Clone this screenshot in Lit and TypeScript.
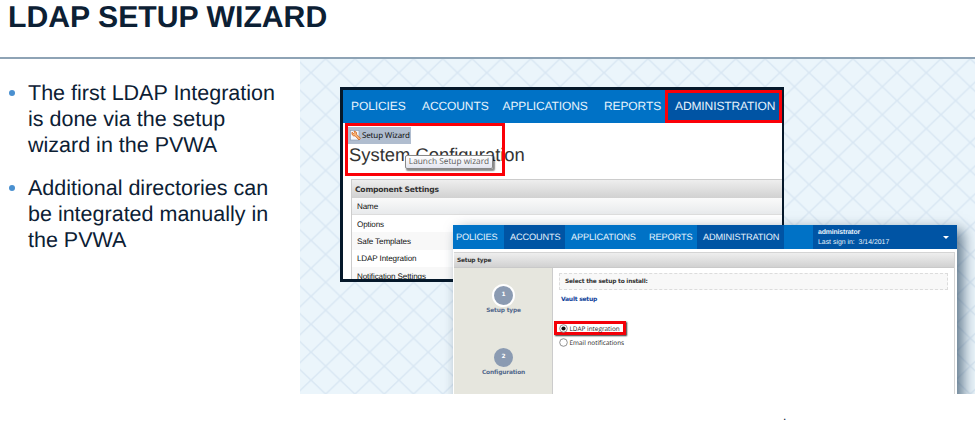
import { LitElement, html, css, svg } from "lit";
import { customElement } from "lit/decorators.js";
import { classMap } from "lit/directives/class-map.js";

@customElement("settings-window")
class SettingsWindow extends LitElement {
  static styles = css`
    :host { display: flex; flex-direction: column; box-sizing: border-box; width: 444px; height: 195px; border: solid #05182a; border-width: 3px 2px 3px 3px; background: #fff; overflow: hidden; font-family: "Liberation Sans", sans-serif; }
    * { box-sizing: border-box; }
    nav { display: flex; flex: none; height: 33px; background: #0072c6; align-items: stretch; color: #e6f2fc; font-size: 12px; letter-spacing: -.1px; }
    nav span { display: flex; align-items: center; padding: 0 0 1px 8px; white-space: nowrap; }
    .policies { width: 71px; } .accounts { width: 80.5px; } .applications { width: 101.5px; } .reports { width: 69px; }
    nav .admin { flex: 1; background: #0054a4; border: 3px solid #fb0007; padding-left: 7px; }
    .main { position: relative; display: flex; flex-direction: column; flex: 1; }
    .tool { display: flex; align-items: center; gap: 1px; width: 63px; height: 17px; margin: 4px 0 0 5px; padding-left: 2px; background: #b0bdcf; font: 8px "Noto Sans", sans-serif; color: #111; white-space: nowrap; letter-spacing: -.15px; }
    .tool svg { flex: none; width: 11px; height: 11px; }
    h2 { margin: 0 0 0 6px; font-size: 18.4px; line-height: 21px; height: 21px; font-weight: 400; color: #333; white-space: nowrap; }
    .mark { position: absolute; left: 2px; top: 0; width: 160px; height: 53px; border: 3px solid #fb0007; }
    .tip { position: absolute; left: 62px; top: 32px; width: 88px; height: 14px; border: 1px solid #888; border-radius: 2px; background: linear-gradient(#fff, #e3e5ef); box-shadow: 1.5px 1.5px 1.5px #0007; color: #5c5c5c; font: 8.3px/12px "Open Sans", sans-serif; text-align: center; white-space: nowrap; }
    .table { margin: 14px 0 0 8px; border-left: 1px solid #ccc; border-top: 1px solid #ccc; display: flex; flex-direction: column; }
    .table div { flex: none; height: 17.4px; display: flex; align-items: center; padding-left: 5px; font-size: 8.1px; color: #111; background: #fff; letter-spacing: -.13px; white-space: nowrap; }
    .table .caption { height: 18px; background: linear-gradient(#eee, #d1d1d1); font: bold 7.6px "DejaVu Sans", sans-serif; color: #333; padding-left: 3px; letter-spacing: -.2px; }
    .table .name { height: 17px; background: linear-gradient(#fafafa, #e8eaec); border-bottom: 1px solid #ddd; }
    .table .alt { background: #f8f8f8; }
    .table .name, .table .caption ~ div { padding-top: 1px; }
  `;
  render() {
    return html`
      <nav>
        <span class="policies">POLICIES</span><span class="accounts">ACCOUNTS</span><span class="applications">APPLICATIONS</span><span class="reports">REPORTS</span><span class="admin">ADMINISTRATION</span>
      </nav>
      <div class="main">
        <div class="tool">
          <svg viewBox="0 0 11 11"><rect x=".5" y=".5" width="8.5" height="9.5" fill="#f4f7fb" stroke="#8798ad" stroke-width=".6"/><path d="M2 2.2 3.6 3.6 4.7 2.4 4 1.2C6 1 7 2.6 6.4 4.2L10.5 8.4 9 10 5 5.8C3.1 6.5 1.4 4.6 2 2.2Z" fill="#f7b477" stroke="#d4641c" stroke-width=".8"/></svg>
          <span>Setup Wizard</span>
        </div>
        <h2>System Configuration</h2>
        <div class="table">
          <div class="caption">Component Settings</div>
          <div class="name">Name</div>
          <div>Options</div>
          <div class="alt">Safe Templates</div>
          <div>LDAP Integration</div>
          <div class="alt">Notification Settings</div>
        </div>
        <div class="mark"></div>
        <div class="tip">Launch Setup wizard</div>
      </div>`;
  }
}

@customElement("wizard-window")
class WizardWindow extends LitElement {
  static styles = css`
    :host { display: flex; flex-direction: column; width: 504px; height: 190px; background: #fff; box-shadow: 6px 5px 13px 0 #0d2c4aa0; font-family: "Liberation Sans", sans-serif; }
    * { box-sizing: border-box; }
    nav { display: flex; flex: none; height: 24px; background: #0072c6; color: #e6f2fc; font-size: 9.2px; letter-spacing: -.12px; }
    nav span { display: flex; align-items: center; padding: 0 0 1px 6px; white-space: nowrap; }
    nav .on { background: #0054a4; }
    .policies { width: 51px; } .accounts { width: 61px; } .applications { width: 78px; } .reports { width: 54px; } .admin { width: 87px; }
    nav .policies { padding-left: 3px; }
    .user { margin-left: 29px; flex: 1; background: #0054a4; display: flex; align-items: center; justify-content: space-between; padding: 1px 8px 0 5px; font-size: 6.9px; line-height: 10px; letter-spacing: 0; }
    .user b { display: block; font-size: 6.9px; letter-spacing: -.15px; }
    .arrow { border: solid transparent; border-width: 3px 3px 0; border-top-color: #fff; }
    .panel { display: flex; flex-direction: column; flex: 1; margin: 3px 2px 0 1px; border: solid #d4d4d4; border-width: 1px 1px 0 0; }
    .caption { height: 15px; flex: none; display: flex; align-items: center; background: linear-gradient(#eee, #d1d1d1); font: bold 5.9px "DejaVu Sans", sans-serif; color: #333; padding: 1px 0 0 3px; letter-spacing: -.22px; border-bottom: 1px solid #c9c9c9; }
    .body { flex: 1; display: flex; }
    .steps { width: 99px; background: #e6e6de; border-right: 1.5px solid #ccc; display: flex; flex-direction: column; align-items: center; padding: 15.5px 0 0 1px; font: bold 5.9px/8px "DejaVu Sans", sans-serif; letter-spacing: -.18px; color: #53698c; }
    .step { display: flex; flex-direction: column; align-items: center; height: 62px; }
    .disc { display: flex; align-items: center; justify-content: center; width: 23px; height: 23px; border: 2px solid #e6e6de; border-radius: 50%; background: #8b9bb2; color: #fff; }
    .step.current .disc { border-color: #fff; }
    .content { flex: 1; padding: 5px 6px 0 5.5px; font: 6.4px "Open Sans", sans-serif; color: #222; }
    .hint { height: 17px; border: 1px dashed #dcdcdc; background: #f8f8f8; display: flex; align-items: center; padding: 1px 0 0 5.5px; font: bold 5.9px "DejaVu Sans", sans-serif; letter-spacing: -.2px; color: #333; }
    .title { font: bold 6px/8px "DejaVu Sans", sans-serif; letter-spacing: -.25px; color: #0f429a; margin: 6px 0 17px 2.5px; }
    .option { display: flex; align-items: center; gap: 2px; height: 14px; padding-left: 5px; margin-left: -5px; width: 72px; white-space: nowrap; }
    .chosen { border: 3px solid #f40008; padding-left: 2px; box-shadow: 1px 1px 1.5px #333; }
    .option svg { width: 9px; height: 9px; flex: none; }
  `;
  radio(on: boolean) {
    return html`<svg viewBox="0 0 9 9"><circle cx="4.5" cy="4.5" r="3.8" fill="#fff" stroke="#777" stroke-width=".8"/>${on ? svg`<circle cx="4.5" cy="4.5" r="2.1" fill="#111"/>` : null}</svg>`;
  }
  step(n: number, label: string, current = false) {
    return html`<div class=${classMap({ step: true, current })}><span class="disc">${n}</span><span>${label}</span></div>`;
  }
  render() {
    return html`
      <nav>
        <span class="policies">POLICIES</span><span class="accounts on">ACCOUNTS</span><span class="applications">APPLICATIONS</span><span class="reports">REPORTS</span><span class="admin on">ADMINISTRATION</span>
        <div class="user"><div><b>administrator</b>Last sign in: &nbsp;3/14/2017</div><i class="arrow"></i></div>
      </nav>
      <div class="panel">
        <div class="caption">Setup type</div>
        <div class="body">
          <div class="steps">${this.step(1, "Setup type", true)}${this.step(2, "Configuration")}</div>
          <div class="content">
            <div class="hint">Select the setup to install:</div>
            <div class="title">Vault setup</div>
            <div class="option chosen">${this.radio(true)}<span>LDAP integration</span></div>
            <div class="option">${this.radio(false)}<span>Email notifications</span></div>
          </div>
        </div>
      </div>`;
  }
}

@customElement("app-root")
class AppRoot extends LitElement {
  static styles = css`
    :host { display: flex; flex-direction: column; width: 975px; height: 422px; background: #fff; overflow: hidden; font-family: "Liberation Sans", sans-serif; color: #0c2034; text-rendering: geometricPrecision; }
    * { box-sizing: border-box; }
    header { height: 59px; flex: none; border-bottom: 2px solid #8ea3b5; padding-left: 8px; }
    h1 { margin: 0; font-size: 30.2px; line-height: 35px; font-weight: 700; white-space: nowrap; }
    .slide { display: flex; height: 335px; flex: none; }
    ul { list-style: none; margin: 0; padding: 21px 0 0 9px; width: 300px; font-size: 21.5px; line-height: 26px; white-space: nowrap; }
    li { display: flex; gap: 13px; margin-bottom: 17px; }
    li::before { content: ""; width: 6px; height: 6px; border-radius: 50%; background: #4a90d0; margin-top: 10px; }
    .canvas { position: relative; width: 675px; overflow: hidden; background: #ebf5fb; }
    .lattice { display: block; width: 675px; height: 335px; }
    settings-window { position: absolute; left: 40px; top: 28px; }
    wizard-window { position: absolute; left: 153px; top: 166px; }
    footer { padding: 16px 0 0 783px; font-size: 12px; line-height: 12px; }
  `;
  render() {
    return html`
      <header><h1>LDAP SETUP WIZARD</h1></header>
      <div class="slide">
        <ul>
          <li><span>The first LDAP Integration<br>is done via the setup<br>wizard in the PVWA</span></li>
          <li><span>Additional directories can<br>be integrated manually in<br>the PVWA</span></li>
        </ul>
        <div class="canvas">
          <svg class="lattice">
            <defs><pattern id="net" x="11" y="13.7" width="29.3" height="27.95" patternUnits="userSpaceOnUse"><path d="M-2-1.9 31.3 29.85M31.3-1.9-2 29.85" stroke="#d9e7f3" stroke-width="1.5"/></pattern></defs>
            <rect width="675" height="335" fill="url(#net)"/>
          </svg>
          <settings-window></settings-window>
          <wizard-window></wizard-window>
        </div>
      </div>
      <footer>.</footer>`;
  }
}
